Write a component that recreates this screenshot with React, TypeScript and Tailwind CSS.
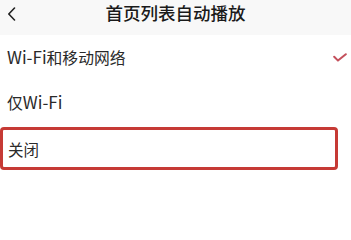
import React from "react";

export default function App() {
  const font = { fontFamily: '"Noto Sans CJK SC", "Noto Sans", sans-serif' };
  return (
    <div className="w-[351px] h-[225px] bg-white text-[#222] overflow-hidden" style={font}>
      <div className="h-[35px] bg-[#f8f8f8] relative flex justify-center pt-[2px]">
        <svg className="absolute left-[7px] top-[7px]" width="9" height="14" viewBox="0 0 9 14">
          <path d="M7.5 1 L1.8 7 L7.5 13" fill="none" stroke="#222" strokeWidth="1.6" strokeLinecap="round" strokeLinejoin="round" />
        </svg>
        <div className="text-[17.5px] leading-[22px] font-medium text-[#1a1a1a]">首页列表自动播放</div>
      </div>
      <div className="h-[45px] flex items-center justify-between pl-[7px] pr-[4px]">
        <span className="text-[15.8px] leading-[20px] text-[#2a2a2a]">
          <span className="text-[17px]">Wi-Fi</span>和移动网络
        </span>
        <svg width="14" height="9" viewBox="0 0 14 9">
          <path d="M1.2 3.8 L5 7.6 L12.8 1.2" fill="none" stroke="#c4505c" strokeWidth="2" strokeLinecap="round" strokeLinejoin="round" />
        </svg>
      </div>
      <div className="h-[45px] flex items-center pl-[7px] pb-[1px]">
        <span className="text-[15.8px] leading-[20px] text-[#2a2a2a]">
          仅<span className="text-[17px]">Wi-Fi</span>
        </span>
      </div>
      <div className="mt-[2px] w-[338px] h-[43px] border-[3px] border-[#c63a35] rounded-[4px] flex items-center pl-[5px]">
        <span className="text-[15.5px] leading-[20px] text-[#2a2a2a]">关闭</span>
      </div>
    </div>
  );
}
